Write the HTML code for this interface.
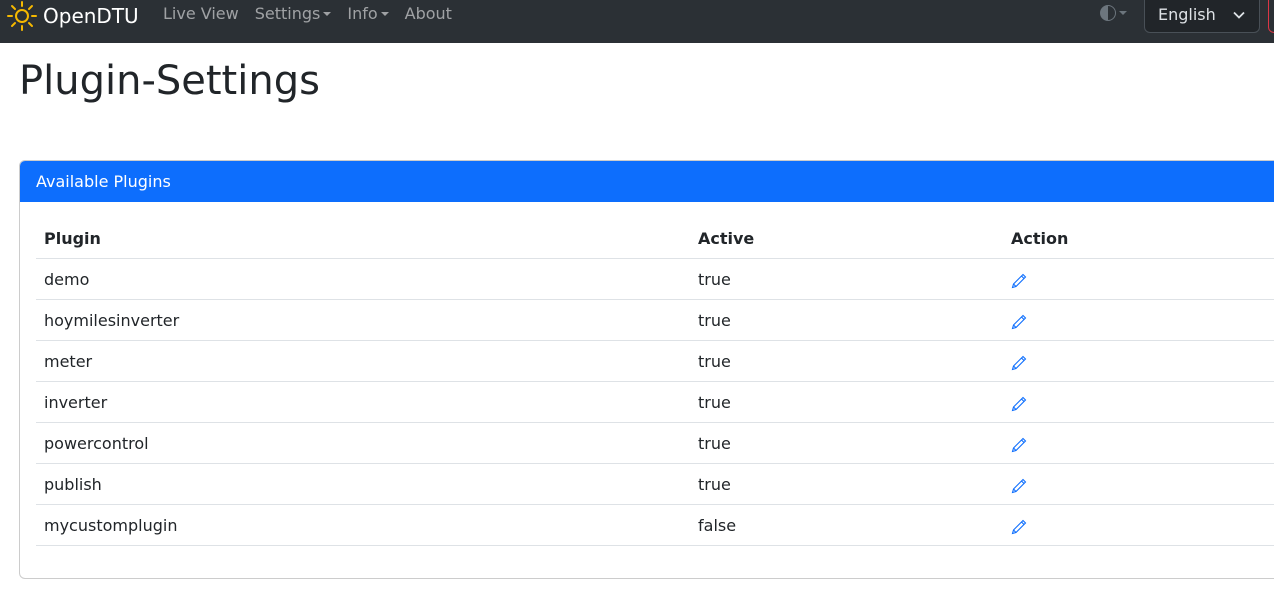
<!DOCTYPE html>
<html><head><meta charset="utf-8"><style>
*{box-sizing:border-box}
body{margin:0;width:1274px;height:595px;overflow:hidden;background:#fff;font-family:"DejaVu Sans","Liberation Sans",sans-serif;color:#212529;font-size:16px}
.nav{height:43px;background:#2b3035;position:relative}
.brand{position:absolute;left:7px;top:1px;height:30px;display:flex;align-items:center;color:#fff;font-size:20px}
.brand svg{margin-right:6px}
.links{position:absolute;left:163px;top:4px;display:flex;gap:16px;color:rgba(255,255,255,.55);font-size:16px}
.caret{display:inline-block;border-top:4px solid rgba(255,255,255,.55);border-left:4px solid transparent;border-right:4px solid transparent;vertical-align:3px;margin-left:3px}
.theme{position:absolute;left:1100px;top:5px;display:flex;align-items:center}
.lang{position:absolute;left:1144px;top:-6px;width:116px;height:39px;border:1px solid #495057;border-radius:6px;background:#212529;color:#dee2e6;padding:10px 0 0 13px;font-size:16px}
.lang svg{position:absolute;right:14px;top:16px}
.red{position:absolute;left:1268px;top:-6px;width:20px;height:39px;border:1px solid #dc3545;border-radius:6px}
h1{margin:0;position:absolute;left:19px;top:58px;font-weight:400;font-size:40px}
.card{position:absolute;left:19px;top:160px;width:1270px;height:419px;border:1px solid #ccc;border-radius:6px;overflow:hidden}
.ch{height:41px;background:#0d6efd;color:#fff;padding:11px 16px;font-size:16px}
table{position:absolute;left:16px;top:57px;width:1260px;border-collapse:collapse}
td,th{text-align:left;height:41px;padding:2px 8px 0;border-bottom:1px solid #dee2e6;font-size:16px}
th{font-weight:bold;height:40px}
td svg{vertical-align:-4px}
</style></head><body>
<div class="nav">
<div class="brand"><svg width="30" height="30" viewBox="0 0 30 30" stroke="#f5b800" stroke-width="2" fill="none" stroke-linecap="round"><circle cx="15" cy="15" r="6"/><path d="M15 1v4M15 25v4M1 15h4M25 15h4M5 5l3 3M22 22l3 3M5 25l3-3M22 8l3-3"/></svg>OpenDTU</div>
<div class="links"><span>Live View</span><span>Settings<i class="caret"></i></span><span>Info<i class="caret"></i></span><span>About</span></div>
<div class="theme"><svg width="16" height="16" viewBox="0 0 16 16"><circle cx="8" cy="8" r="7.5" fill="none" stroke="#6c757d"/><path d="M8 .5a7.5 7.5 0 0 0 0 15z" fill="#6c757d"/></svg><i class="caret" style="border-top-color:#6c757d;vertical-align:0"></i></div>
<div class="lang">English<svg width="12" height="8" viewBox="0 0 12 8" fill="none" stroke="#dee2e6" stroke-width="1.8"><path d="M1 1.5l5 5 5-5"/></svg></div>
<div class="red"></div>
</div>
<h1>Plugin-Settings</h1>
<div class="card"><div class="ch">Available Plugins</div>
<table>
<tr><th style="width:654px">Plugin</th><th style="width:313px">Active</th><th>Action</th></tr>
<tr><td>demo</td><td>true</td><td><svg width="16" height="16" viewBox="0 0 16 16" fill="none" stroke="#0d6efd" stroke-width="1.1"><path d="M12 1.5l2.5 2.5L5 13.5 1.5 14.5 2.5 11zM10.5 3l2.5 2.5M2.5 11l2.5 2.5"/></svg></td></tr>
<tr><td>hoymilesinverter</td><td>true</td><td><svg width="16" height="16" viewBox="0 0 16 16" fill="none" stroke="#0d6efd" stroke-width="1.1"><path d="M12 1.5l2.5 2.5L5 13.5 1.5 14.5 2.5 11zM10.5 3l2.5 2.5M2.5 11l2.5 2.5"/></svg></td></tr>
<tr><td>meter</td><td>true</td><td><svg width="16" height="16" viewBox="0 0 16 16" fill="none" stroke="#0d6efd" stroke-width="1.1"><path d="M12 1.5l2.5 2.5L5 13.5 1.5 14.5 2.5 11zM10.5 3l2.5 2.5M2.5 11l2.5 2.5"/></svg></td></tr>
<tr><td>inverter</td><td>true</td><td><svg width="16" height="16" viewBox="0 0 16 16" fill="none" stroke="#0d6efd" stroke-width="1.1"><path d="M12 1.5l2.5 2.5L5 13.5 1.5 14.5 2.5 11zM10.5 3l2.5 2.5M2.5 11l2.5 2.5"/></svg></td></tr>
<tr><td>powercontrol</td><td>true</td><td><svg width="16" height="16" viewBox="0 0 16 16" fill="none" stroke="#0d6efd" stroke-width="1.1"><path d="M12 1.5l2.5 2.5L5 13.5 1.5 14.5 2.5 11zM10.5 3l2.5 2.5M2.5 11l2.5 2.5"/></svg></td></tr>
<tr><td>publish</td><td>true</td><td><svg width="16" height="16" viewBox="0 0 16 16" fill="none" stroke="#0d6efd" stroke-width="1.1"><path d="M12 1.5l2.5 2.5L5 13.5 1.5 14.5 2.5 11zM10.5 3l2.5 2.5M2.5 11l2.5 2.5"/></svg></td></tr>
<tr><td>mycustomplugin</td><td>false</td><td><svg width="16" height="16" viewBox="0 0 16 16" fill="none" stroke="#0d6efd" stroke-width="1.1"><path d="M12 1.5l2.5 2.5L5 13.5 1.5 14.5 2.5 11zM10.5 3l2.5 2.5M2.5 11l2.5 2.5"/></svg></td></tr>
</table></div>
</body></html>
